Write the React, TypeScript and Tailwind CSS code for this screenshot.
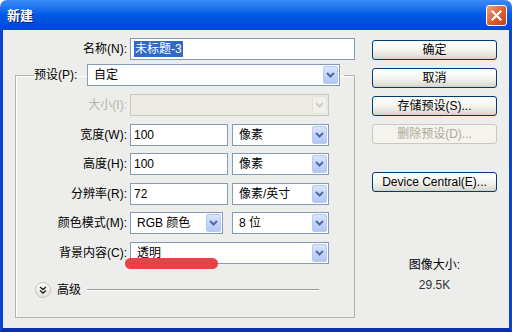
import React from "react";

const cjk = "font-['Liberation_Sans','Noto_Sans_CJK_SC',sans-serif]";

function Chevron({ disabled }: { disabled?: boolean }) {
  return (
    <div
      className={
        disabled
          ? "mr-px flex h-[18px] w-[15px] items-center justify-center rounded-[2px] border border-[#e3e2da] bg-[#f1f0ea]"
          : "mr-px flex h-[18px] w-[15px] items-center justify-center rounded-[2px] border border-[#b7c9f2] bg-gradient-to-b from-[#d9e4fc] to-[#b3c7f4]"
      }
    >
      <svg width="9" height="6" viewBox="0 0 9 6">
        <path
          d="M1 1 L4.5 4.5 L8 1"
          fill="none"
          stroke={disabled ? "#cfcdc3" : "#4d6aa8"}
          strokeWidth="2"
        />
      </svg>
    </div>
  );
}

function Select({ value, className, disabled }: { value?: string; className: string; disabled?: boolean }) {
  return (
    <div
      className={
        (disabled
          ? "flex h-[22px] items-center border border-[#c9c7ba] bg-[#ebebe4] "
          : "flex h-[22px] items-center border border-[#7f9db9] bg-white ") + className
      }
    >
      <span className="flex-1 pl-[6px] text-[12px] leading-none text-black">{value}</span>
      <Chevron disabled={disabled} />
    </div>
  );
}

function Input({ children, className }: { children: React.ReactNode; className: string }) {
  return (
    <div className={"flex h-[22px] items-center border border-[#7f9db9] bg-white pl-[3px] text-[12px] leading-none text-black " + className}>
      {children}
    </div>
  );
}

function Label({ children, disabled }: { children: React.ReactNode; disabled?: boolean }) {
  return (
    <div className={"w-[114px] pr-[3px] text-right text-[12px] leading-none " + (disabled ? "text-[#b5b3a8]" : "text-black")}>
      {children}
    </div>
  );
}

function Button({ children, disabled }: { children: React.ReactNode; disabled?: boolean }) {
  return (
    <div
      className={
        disabled
          ? "flex h-[20px] w-[125px] items-center justify-center rounded-[3px] border border-[#cac8bb] bg-[#f4f3ee] text-[12px] leading-none text-[#aca899]"
          : "flex h-[20px] w-[125px] items-center justify-center rounded-[3px] border border-[#003c74] bg-gradient-to-b from-white via-[#f5f5f0] to-[#d8d6cc] text-[12px] leading-none text-black shadow-[inset_0_-1px_0_#d6d0c5]"
      }
    >
      {children}
    </div>
  );
}

export default function App() {
  return (
    <div className={"flex h-[332px] w-[512px] flex-col bg-white " + cjk}>
      {/* title bar */}
      <div className="flex h-[30px] items-center justify-between rounded-t-[7px] bg-gradient-to-b from-[#3b8cf5] via-[#0058e6] to-[#0047d4] pl-[7px] pr-[5px]">
        <span className="text-[13px] font-bold leading-none text-white [text-shadow:1px_1px_0_#0a1e7a]">新建</span>
        <div className="flex h-[21px] w-[21px] items-center justify-center rounded-[3px] border border-white bg-gradient-to-br from-[#f0a080] via-[#e06030] to-[#c0401c]">
          <svg width="11" height="11" viewBox="0 0 11 11">
            <path d="M1.5 1.5 L9.5 9.5 M9.5 1.5 L1.5 9.5" stroke="white" strokeWidth="2.2" strokeLinecap="square" />
          </svg>
        </div>
      </div>

      {/* body */}
      <div className="flex flex-1 border-x-[3px] border-b-[4px] border-x-[#0845d6] border-b-[#0a2fb0] bg-[#ededeb] pl-[12px]">
        <div className="flex w-[340px] flex-col pt-[8px]">
          <div className="flex items-center">
            <div className="w-[115px] pr-[3px] text-right text-[12px] leading-none text-black">名称(N):</div>
            <Input className="w-[225px]">
              <span className="bg-[#316ac5] px-px py-[2px] text-white">未标题-3</span>
            </Input>
          </div>

          <fieldset className="relative mt-[4px] w-[340px] border border-[#b3b2ad] pb-[19px] shadow-[inset_1px_1px_0_#ffffff]">
            <legend className="ml-[18px] flex items-center pr-[4px]">
              <span className="w-[53px] text-[12px] leading-none text-black">预设(P):</span>
              <Select value="自定" className="w-[253px]" />
            </legend>

            <div className="flex flex-col gap-[7.5px] pt-[8px]">
              <div className="flex items-center">
                <Label disabled>大小(I):</Label>
                <Select className="w-[199px]" disabled />
              </div>
              <div className="flex items-center">
                <Label>宽度(W):</Label>
                <Input className="w-[98px]">100</Input>
                <Select value="像素" className="ml-[4px] w-[97px]" />
              </div>
              <div className="flex items-center">
                <Label>高度(H):</Label>
                <Input className="w-[98px]">100</Input>
                <Select value="像素" className="ml-[4px] w-[97px]" />
              </div>
              <div className="flex items-center">
                <Label>分辨率(R):</Label>
                <Input className="w-[98px]">72</Input>
                <Select value="像素/英寸" className="ml-[4px] w-[97px]" />
              </div>
              <div className="flex items-center">
                <Label>颜色模式(M):</Label>
                <Select value="RGB 颜色" className="w-[93px]" />
                <Select value="8 位" className="ml-[9px] w-[97px]" />
              </div>
              <div className="relative flex items-center">
                <Label>背景内容(C):</Label>
                <Select value="透明" className="w-[199px]" />
                <div className="absolute left-[109px] top-[16px] h-[11px] w-[93px] rounded-full bg-[#e8383d] opacity-95" />
              </div>
            </div>

            <div className="mt-[18px] flex items-center pl-[19px]">
              <div className="flex h-[16px] w-[16px] items-center justify-center rounded-full border border-[#c4c2b8] bg-gradient-to-b from-white to-[#e2e0d8]">
                <svg width="8" height="8" viewBox="0 0 8 8">
                  <path d="M1 1 L4 3.5 L7 1 M1 4.5 L4 7 L7 4.5" fill="none" stroke="#222" strokeWidth="1.4" />
                </svg>
              </div>
              <span className="ml-[6px] text-[12px] leading-none text-black">高级</span>
              <div className="ml-[6px] h-[2px] w-[232px] border-t border-b border-t-[#9a9a96] border-b-white" />
            </div>
          </fieldset>
        </div>

        <div className="ml-[17px] flex w-[125px] flex-col pt-[10px]">
          <div className="flex flex-col gap-[8px]">
            <Button>确定</Button>
            <Button>取消</Button>
            <Button>存储预设(S)...</Button>
            <Button disabled>删除预设(D)...</Button>
          </div>
          <div className="mt-[28px]">
            <Button>Device Central(E)...</Button>
          </div>
          <div className="mt-[67px] text-center text-[12px] leading-none text-black">图像大小:</div>
          <div className="mt-[8px] text-center text-[12px] leading-none text-[#333]">29.5K</div>
        </div>
      </div>
    </div>
  );
}
